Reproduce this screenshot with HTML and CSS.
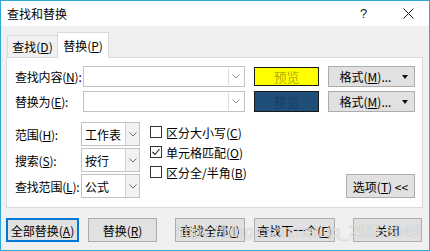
FILE: index.html
```html
<!DOCTYPE html>
<html lang="zh-CN">
<head>
    <meta charset="UTF-8">
    <title>查找和替换</title>
    <link rel="stylesheet" href="styles.css">
</head>
<body>

    <div class="window">

        <div class="titlebar">
            <span class="title">查找和替换</span>
            <span class="help">?</span>
            <span class="close">
                <svg width="11" height="11" viewBox="0 0 11 11"><path d="M0.5 0.5 L10.5 10.5 M10.5 0.5 L0.5 10.5" stroke="#222" stroke-width="1" fill="none"/></svg>
            </span>
        </div>

        <div class="tabs">
            <div class="tab">查找(<u>D</u>)</div>
            <div class="tab active">替换(<u>P</u>)</div>
        </div>

        <div class="panel">
            <div class="row">
                <span class="label">查找内容(<u>N</u>):</span>
                <div class="combo">
                    <span class="combo-arrow"><svg width="8" height="5" viewBox="0 0 8 5"><path d="M0.5 0.5 L4 4 L7.5 0.5" stroke="#8a8a8a" fill="none"/></svg></span>
                </div>
                <div class="preview yellow">预览</div>
                <div class="btn format">格式(<u>M</u>)... <span class="caret"></span></div>
            </div>
            <div class="row second">
                <span class="label">替换为(<u>E</u>):</span>
                <div class="combo">
                    <span class="combo-arrow"><svg width="8" height="5" viewBox="0 0 8 5"><path d="M0.5 0.5 L4 4 L7.5 0.5" stroke="#8a8a8a" fill="none"/></svg></span>
                </div>
                <div class="preview blue">预览</div>
                <div class="btn format">格式(<u>M</u>)... <span class="caret"></span></div>
            </div>

            <div class="options">
                <div class="fields">
                    <div class="field">
                        <span class="field-label">范围(<u>H</u>):</span>
                        <div class="select"><span class="select-text">工作表</span><span class="select-arrow"><svg width="8" height="5" viewBox="0 0 8 5"><path d="M0.5 0.5 L4 4 L7.5 0.5" stroke="#707070" fill="none"/></svg></span></div>
                    </div>
                    <div class="field">
                        <span class="field-label">搜索(<u>S</u>):</span>
                        <div class="select"><span class="select-text">按行</span><span class="select-arrow"><svg width="8" height="5" viewBox="0 0 8 5"><path d="M0.5 0.5 L4 4 L7.5 0.5" stroke="#707070" fill="none"/></svg></span></div>
                    </div>
                    <div class="field">
                        <span class="field-label">查找范围(<u>L</u>):</span>
                        <div class="select"><span class="select-text">公式</span><span class="select-arrow"><svg width="8" height="5" viewBox="0 0 8 5"><path d="M0.5 0.5 L4 4 L7.5 0.5" stroke="#707070" fill="none"/></svg></span></div>
                    </div>
                </div>

                <div class="checks">
                    <div class="check"><span class="box"></span>区分大小写(<u>C</u>)</div>
                    <div class="check"><span class="box"><svg width="10" height="10" viewBox="0 0 10 10"><path d="M1.5 5 L4 7.5 L8.5 2" stroke="#222" stroke-width="1.1" fill="none"/></svg></span>单元格匹配(<u>O</u>)</div>
                    <div class="check"><span class="box"></span>区分全/半角(<u>B</u>)</div>
                </div>

                <div class="btn options-btn">选项(<u>T</u>) &lt;&lt;</div>
            </div>
        </div>

        <div class="actions">
            <div class="btn action default">全部替换(<u>A</u>)</div>
            <div class="btn action replace">替换(<u>R</u>)</div>
            <div class="btn action find-all">查找全部(<u>I</u>)</div>
            <div class="btn action find-next">查找下一个(<u>F</u>)</div>
            <div class="btn action close-btn">关闭</div>
        </div>

        <div class="watermark">https://blog.csdn.net/qq_25558049</div>
    </div>

</body>
</html>
```

FILE: styles.css
```css
body {
    margin: 0;
    padding: 0;
    font-family: "Noto Sans CJK SC", "Noto Sans", sans-serif;
    font-size: 12px;
    color: #000;
    background-color: #f0f0f0;
}

u {
    text-decoration: underline;
    text-underline-offset: 1px;
}

.window {
    position: relative;
    width: 430px;
    height: 251px;
    box-sizing: border-box;
    border: 1px solid #2ea6d6;
    background-color: #f0f0f0;
    overflow: hidden;
}

.titlebar {
    height: 25px;
    background-color: #fff;
    display: flex;
    align-items: center;
    padding-left: 6px;
}

.title {
    flex: 1;
    line-height: 14px;
}

.help {
    width: 12px;
    margin-right: 31px;
    font-family: "Liberation Sans", sans-serif;
    font-size: 13px;
    color: #222;
}

.close {
    display: flex;
    width: 11px;
    margin-right: 15px;
}

.tabs {
    height: 31px;
    display: flex;
    align-items: flex-end;
    padding-left: 6px;
}

.tab {
    height: 21px;
    width: 49px;
    border: 1px solid #d9d9d9;
    border-bottom: none;
    display: flex;
    align-items: center;
    justify-content: center;
    background-color: #f0f0f0;
    white-space: nowrap;
}

.tab.active {
    position: relative;
    z-index: 1;
    width: 52px;
    height: 26px;
    margin-left: -1px;
    margin-bottom: -1px;
    padding-bottom: 1px;
    box-sizing: border-box;
    background-color: #fff;
}

.panel {
    width: 417px;
    height: 151px;
    box-sizing: border-box;
    margin-left: 5px;
    border: 1px solid #d9d9d9;
    background-color: #fff;
    padding: 8px 0 0 8px;
}

.row {
    display: flex;
    align-items: center;
    height: 21px;
}

.row.second {
    margin-top: 4px;
}

.label {
    width: 68px;
    flex-shrink: 0;
    white-space: nowrap;
    letter-spacing: -0.2px;
}

.combo {
    width: 162px;
    height: 21px;
    flex-shrink: 0;
    box-sizing: border-box;
    border: 1px solid #c2c2c2;
    display: flex;
    justify-content: flex-end;
    padding: 1px;
}

.combo-arrow {
    width: 14px;
    border-left: 1px solid #dcdcdc;
    display: flex;
    align-items: center;
    justify-content: center;
}

.preview {
    width: 65px;
    height: 19px;
    flex-shrink: 0;
    box-sizing: border-box;
    margin-left: 9px;
    border: 1px solid #1a1a1a;
    display: flex;
    align-items: center;
    justify-content: center;
    font-family: "DejaVu Serif", "Noto Sans CJK SC", serif;
    font-weight: 300;
    font-size: 13px;
}

.preview.yellow {
    background-color: #ffff00;
    color: #8c8c00;
}

.preview.blue {
    background-color: #1f4e79;
    color: #15375a;
    height: 21px;
}

.btn {
    box-sizing: border-box;
    border: 1px solid #adadad;
    background-color: #e1e1e1;
    display: flex;
    align-items: center;
    justify-content: center;
    white-space: nowrap;
}

.format {
    width: 87px;
    height: 21px;
    flex-shrink: 0;
    margin-left: 9px;
    position: relative;
    padding-right: 12px;
}

.caret {
    position: absolute;
    right: 6px;
    top: 8px;
    width: 0;
    height: 0;
    border-left: 3px solid transparent;
    border-right: 3px solid transparent;
    border-top: 4px solid #111;
}

.options {
    display: flex;
    margin-top: 10px;
}

.fields {
    display: flex;
    flex-direction: column;
    gap: 2px;
}

.field {
    display: flex;
    align-items: center;
    height: 24px;
}

.field-label {
    width: 66px;
    white-space: nowrap;
    letter-spacing: -0.2px;
}

.select {
    width: 59px;
    height: 24px;
    box-sizing: border-box;
    border: 1px solid #c2c2c2;
    display: flex;
}

.select-text {
    flex: 1;
    padding-left: 3px;
    display: flex;
    align-items: center;
}

.select-arrow {
    width: 13px;
    border-left: 1px solid #cfcfcf;
    background-color: #f2f2f2;
    display: flex;
    align-items: center;
    justify-content: center;
}

.checks {
    margin-left: 10px;
    display: flex;
    flex-direction: column;
}

.check {
    height: 20px;
    display: flex;
    align-items: center;
    white-space: nowrap;
}

.box {
    width: 12px;
    height: 12px;
    box-sizing: border-box;
    border: 1px solid #333;
    margin-right: 4px;
    display: flex;
    align-items: center;
    justify-content: center;
}

.options-btn {
    margin-left: auto;
    margin-right: 7px;
    align-self: flex-end;
    width: 69px;
    height: 24px;
}

.actions {
    display: flex;
    margin-top: 10px;
    padding-left: 5px;
}

.action {
    height: 24px;
}

.action.default {
    width: 73px;
    border: 1px solid #0078d7;
    box-shadow: inset 0 0 0 1px #0078d7;
}

.action.replace {
    width: 69px;
    margin-left: 9px;
}

.action.find-all {
    width: 70px;
    margin-left: 18px;
}

.action.find-next {
    width: 81px;
    margin-left: 9px;
}

.action.close-btn {
    width: 69px;
    margin-left: 18px;
}

.watermark {
    position: absolute;
    left: 174px;
    top: 222px;
    font-family: "Liberation Sans", sans-serif;
    font-size: 16px;
    color: rgba(255, 255, 255, 0.75);
    text-shadow: 0 0 1px rgba(0, 0, 0, 0.35);
    white-space: nowrap;
}
```
